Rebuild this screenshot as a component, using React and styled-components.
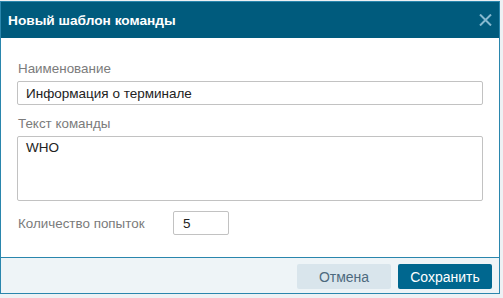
import React from 'react'
import styled, { createGlobalStyle } from 'styled-components'

const GlobalStyle = createGlobalStyle`
    html, body {
        margin: 0;
        padding: 0;
        background: #eef1f4;
        font-family: "Liberation Sans", Arial, sans-serif;
    }
`

const Dialog = styled.div`
    width: 498px;
    margin-top: 1px;
    border: 1px solid #2a86ad;
    background: #fff;
    display: flex;
    flex-direction: column;
`

const Header = styled.div`
    height: 36px;
    background: #005b7d;
    display: flex;
    align-items: center;
    justify-content: space-between;
    padding: 0 7px 0 7px;
`

const Title = styled.div`
    color: #fff;
    font-size: 13.7px;
    font-weight: bold;
`

const CloseButton = styled.button`
    border: 0;
    background: none;
    padding: 0;
    width: 14px;
    height: 14px;
    display: flex;
    align-items: center;
    justify-content: center;
    cursor: pointer;
`

const Body = styled.div`
    padding: 23px 16px 22px 16px;
    display: flex;
    flex-direction: column;
`

const Field = styled.div`
    display: flex;
    flex-direction: column;
    margin-bottom: ${p => p.gap || 0}px;
`

const Label = styled.label`
    color: #7b7b7b;
    font-size: 13.4px;
    line-height: 15px;
    margin: 0 0 5px 1px;
`

const TextInput = styled.input`
    box-sizing: border-box;
    height: 24px;
    width: 100%;
    border: 1px solid #c2c2c2;
    border-radius: 2px;
    padding: 0 8px;
    font-family: inherit;
    font-size: 13.5px;
    color: #222;
    outline: none;
`

const TextArea = styled.textarea`
    box-sizing: border-box;
    height: 65px;
    width: 100%;
    border: 1px solid #c2c2c2;
    border-radius: 2px;
    padding: 3px 8px;
    font-family: inherit;
    font-size: 13.5px;
    line-height: 16px;
    color: #222;
    resize: none;
    outline: none;
`

const InlineRow = styled.div`
    display: flex;
    align-items: center;
`

const InlineLabel = styled.label`
    color: #7b7b7b;
    font-size: 13.4px;
    width: 155px;
    padding-left: 1px;
`

const SmallInput = styled(TextInput)`
    width: 56px;
    padding: 0 9px;
`

const Footer = styled.div`
    border-top: 1px solid #2a86ad;
    background: #eef4f7;
    height: 36px;
    box-sizing: border-box;
    padding: 6px 7px 5px 0;
    display: flex;
    justify-content: flex-end;
    gap: 7px;
`

const Button = styled.button`
    width: 94px;
    height: 25px;
    border: 0;
    border-radius: 2px;
    font-family: inherit;
    font-size: 14px;
    cursor: pointer;
    background: ${p => p.primary ? '#00678f' : '#d9e5ec'};
    color: ${p => p.primary ? '#fff' : '#4d6a7e'};
`

export default function App() {
    return (
        <>
            <GlobalStyle />
            <Dialog>
                <Header>
                    <Title>Новый шаблон команды</Title>
                    <CloseButton aria-label="close">
                        <svg width="13" height="12" viewBox="0 0 13 12">
                            <path d="M1 0.5 L12 11.5 M12 0.5 L1 11.5" stroke="#86b9d0" strokeWidth="2" />
                        </svg>
                    </CloseButton>
                </Header>
                <Body>
                    <Field gap={11}>
                        <Label>Наименование</Label>
                        <TextInput defaultValue="Информация о терминале" />
                    </Field>
                    <Field gap={10}>
                        <Label>Текст команды</Label>
                        <TextArea defaultValue="WHO" />
                    </Field>
                    <InlineRow>
                        <InlineLabel>Количество попыток</InlineLabel>
                        <SmallInput defaultValue="5" />
                    </InlineRow>
                </Body>
                <Footer>
                    <Button>Отмена</Button>
                    <Button primary>Сохранить</Button>
                </Footer>
            </Dialog>
        </>
    )
}
